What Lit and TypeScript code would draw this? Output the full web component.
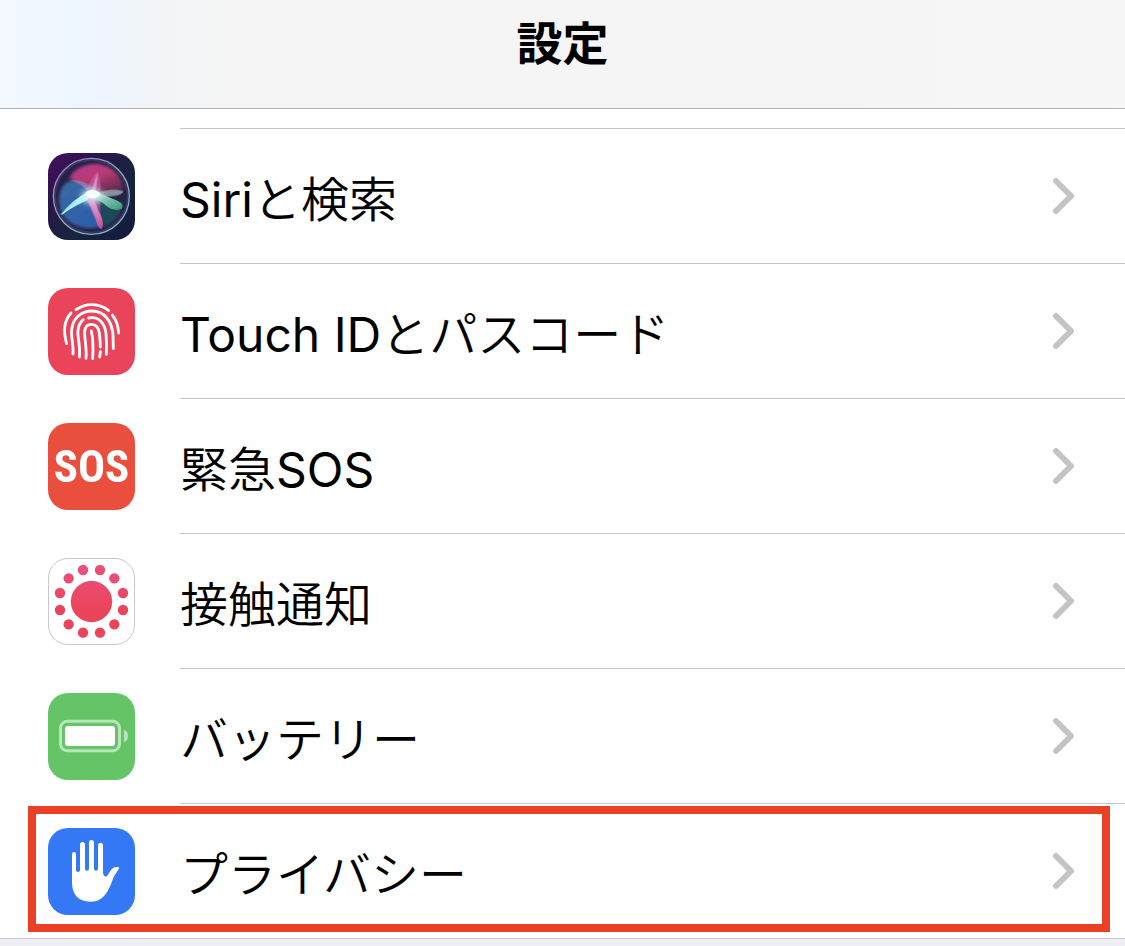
import { LitElement, html, css, svg, type TemplateResult } from "lit";
import { customElement, property } from "lit/decorators.js";

const siriIcon = html`
  <svg class="glyph" viewBox="24 24 261 261" aria-hidden="true">
    <defs>
      <linearGradient id="bg" x1="0" y1="0" x2="1" y2="1">
        <stop offset="0" stop-color="#45105f" />
        <stop offset="0.3" stop-color="#2b1548" />
        <stop offset="0.6" stop-color="#172440" />
        <stop offset="1" stop-color="#131a3a" />
      </linearGradient>
      <linearGradient id="ring" x1="0" y1="0" x2="1" y2="1">
        <stop offset="0" stop-color="#9a78c8" />
        <stop offset="0.5" stop-color="#8fa8c0" />
        <stop offset="1" stop-color="#86b8c8" />
      </linearGradient>
      <linearGradient id="pink" x1="0" y1="0" x2="0.6" y2="1">
        <stop offset="0" stop-color="#b03c90" />
        <stop offset="0.5" stop-color="#b83a72" />
        <stop offset="1" stop-color="#5a2a50" />
      </linearGradient>
      <linearGradient id="blue" x1="0" y1="0" x2="1" y2="1">
        <stop offset="0" stop-color="#3a6a9e" />
        <stop offset="1" stop-color="#2a5cae" />
      </linearGradient>
      <linearGradient id="armLeft" x1="1" y1="0" x2="0" y2="1">
        <stop offset="0" stop-color="#ffffff" />
        <stop offset="1" stop-color="#62d8e6" />
      </linearGradient>
      <linearGradient id="armRight" x1="0" y1="0" x2="1" y2="1">
        <stop offset="0" stop-color="#ffffff" />
        <stop offset="0.6" stop-color="#74c8ac" />
        <stop offset="1" stop-color="#3f9a74" />
      </linearGradient>
      <linearGradient id="armDown" x1="0" y1="0" x2="0" y2="1">
        <stop offset="0" stop-color="#f4c8f0" />
        <stop offset="1" stop-color="#d04890" />
      </linearGradient>
      <filter id="soft" x="-30%" y="-30%" width="160%" height="160%">
        <feGaussianBlur stdDeviation="1.500" />
      </filter>
      <filter id="haze" x="-30%" y="-30%" width="160%" height="160%">
        <feGaussianBlur stdDeviation="5" />
      </filter>
      <filter id="glow" x="-80%" y="-80%" width="260%" height="260%">
        <feGaussianBlur stdDeviation="9" />
      </filter>
    </defs>
    <rect x="24" y="24" width="261" height="261" fill="url(#bg)" />
    <circle cx="154" cy="154" r="113" fill="#262248" />
    <g filter="url(#haze)">
      <path d="M88 100C100 70 140 54 172 57C218 62 248 96 250 134C214 140 184 146 156 154C140 130 116 112 88 100Z" fill="url(#pink)" />
      <path d="M66 206C50 164 58 122 88 108C122 108 144 128 158 152C170 186 182 220 180 246C138 256 90 244 66 206Z" fill="url(#blue)" />
      <path d="M168 160C194 176 222 176 250 170C244 210 220 238 182 248C186 216 178 192 168 160Z" fill="#1e4858" />
    </g>
    <g filter="url(#soft)">
      <path d="M160 148C184 136 226 130 250 138C250 152 206 156 172 156Z" fill="#a8c0c0" opacity="0.7" />
      <path d="M90 107C122 102 158 118 176 148L152 156C138 128 120 112 90 107Z" fill="#9aa8dc" opacity="0.45" />
      <path d="M172 80C156 98 136 128 138 152C148 190 164 224 182 252C190 248 190 234 184 218C178 192 182 156 182 128C181 106 178 92 172 80Z" fill="#d868b8" opacity="0.5" />
      <path d="M172 84C164 108 158 130 148 150L162 158C168 134 172 108 172 84Z" fill="#f2c4ee" opacity="0.6" />
    </g>
    <ellipse cx="156" cy="154" rx="32" ry="22" fill="#c9f4f0" filter="url(#glow)" />
    <g filter="url(#soft)">
      <path d="M64 207C84 180 110 160 134 146C146 138 160 140 166 150C150 164 102 184 64 207Z" fill="url(#armLeft)" />
      <path d="M146 144C166 138 196 152 222 163C242 170 252 180 246 190C238 198 214 196 200 184C184 168 168 162 150 160Z" fill="url(#armRight)" opacity="0.9" />
      <path d="M142 152C160 156 170 178 177 202C188 218 192 240 184 252C174 250 170 236 168 222C160 196 146 180 142 152Z" fill="url(#armDown)" opacity="0.85" />
      <path d="M132 150C140 132 168 130 182 146C176 160 150 168 132 150Z" fill="#f2fffd" />
    </g>
    <path d="M66 207L138 154" stroke="#b8f4fa" stroke-width="4" stroke-linecap="round" />
    <circle cx="154" cy="154" r="109" fill="none" stroke="#4a4a78" stroke-width="6" opacity="0.5" />
    <circle cx="154" cy="154" r="114" fill="none" stroke="url(#ring)" stroke-width="4" />
  </svg>
`;

const touchIdIcon = html`
  <svg class="glyph" viewBox="24 24 261 261" aria-hidden="true">
    <g fill="none" stroke="#fff" stroke-width="8.5" stroke-linecap="round" stroke-linejoin="round">
      <path d="M108 89C138 69 177 68 206 92" />
      <path d="M93 99C74 120 69 154 80 191" />
      <path d="M217 105C229 120 235 140 236 159" />
      <path d="M99 222C101 195 93 175 95 151C97 116 123 93 156 93C194 93 216 125 219 165L220 206" />
      <path d="M118 231C122 198 112 174 114 153C115 138 121 126 130 119" />
      <path d="M146 114C177 108 194 130 198 160C200 185 200 205 199 223" />
      <path d="M138 235C141 202 133 177 134 155C135 141 143 133 154 133C168 133 176 142 178 160C180 175 181 190 181 201" />
      <path d="M181 215L179 231" />
      <path d="M154 153C159 175 160 205 158 236" />
    </g>
  </svg>
`;

const dots = [
  [129, 60], [180, 60], [223, 85], [249, 129], [249, 180], [223, 223],
  [180, 248], [129, 248], [86, 223], [60, 180], [60, 129], [86, 85],
];

const exposureIcon = html`
  <svg class="glyph" viewBox="24 24 261 261" aria-hidden="true">
    <defs>
      <linearGradient id="rose" gradientUnits="userSpaceOnUse" x1="0" y1="44" x2="0" y2="180">
        <stop offset="0" stop-color="#e9507f" />
        <stop offset="1" stop-color="#ea445a" />
      </linearGradient>
    </defs>
    <g fill="url(#rose)">
      <circle cx="154.5" cy="154.5" r="62" />
      ${dots.map(([x, y]) => svg`<circle cx=${x} cy=${y} r="15.5" />`)}
    </g>
  </svg>
`;

const batteryIcon = html`
  <svg class="glyph" viewBox="24 24 261 261" aria-hidden="true">
    <rect x="61.5" y="109" width="177" height="88" rx="20" fill="none" stroke="#b9e5bb" stroke-width="9" />
    <rect x="75" y="123" width="150" height="60" rx="9" fill="#fff" />
    <path d="M252 134C268 139 268 166 252 171Z" fill="#b9e5bb" />
  </svg>
`;

const handIcon = html`
  <svg class="glyph" viewBox="84 99 261 261" aria-hidden="true">
    <path
      fill="#fff"
      d="M156 177Q156 171 162 171Q168 171 168 177V226Q168 231 174 231Q180 231 180 225V149Q180 141 187.500 141Q195 141 195 149V222Q195 227 201 227Q207 227 207 221V143Q207 135 214.500 135Q222 135 222 143V221Q222 227 228 227Q234 227 234 221V151Q234 143 241.500 143Q249 143 249 151V232Q250 245 258 245C266 240 270 226 279 219C286 215 295 216 298 219C294 228 285 236 280 248C269 278 256 320 212 320C172 320 156 296 156 262Z"
    />
  </svg>
`;

interface Item {
  kind: string;
  label: TemplateResult;
  icon: TemplateResult;
  highlighted?: boolean;
}

const items: Item[] = [
  { kind: "siri", label: html`<span class="latin">Siri</span>と検索`, icon: siriIcon },
  { kind: "touch", label: html`<span class="latin">Touch ID</span>とパスコード`, icon: touchIdIcon },
  { kind: "sos", label: html`緊急<span class="latin">SOS</span>`, icon: html`SOS` },
  { kind: "exposure", label: html`接触通知`, icon: exposureIcon },
  { kind: "battery", label: html`バッテリー`, icon: batteryIcon },
  { kind: "privacy", label: html`プライバシー`, icon: handIcon, highlighted: true },
];

@customElement("settings-row")
class SettingsRow extends LitElement {
  @property({ attribute: false }) item!: Item;

  static styles = css`
    :host {
      display: block;
      position: relative;
    }
    .row {
      display: flex;
      align-items: center;
      gap: 45px;
      padding-left: 48px;
      color: #000;
      text-decoration: none;
    }
    .icon {
      display: flex;
      flex: none;
      align-items: center;
      justify-content: center;
      box-sizing: border-box;
      width: 87px;
      height: 87px;
      margin-top: 2px;
      border-radius: 20px;
      overflow: hidden;
    }
    .glyph {
      flex: none;
      width: 87px;
      height: 87px;
    }
    .touch { background: #ea445a; }
    .sos {
      background: #ea4e3d;
      color: #fff;
      font: 700 45px/48px "Roboto Condensed", "Liberation Sans Narrow", "Liberation Sans", sans-serif;
    }
    .exposure {
      background: #fff;
      border: 1px solid #c8c8ca;
    }
    .battery { background: #65c466; }
    .privacy { background: #3478f6; }
    .body {
      display: flex;
      flex: 1;
      align-items: center;
      justify-content: space-between;
      box-sizing: border-box;
      min-height: 135px;
      padding-right: 49px;
      border-top: 1px solid #c6c6c8;
    }
    .label {
      font: 350 48px/72px "Noto Sans CJK JP DemiLight", "Noto Sans CJK JP", sans-serif;
    }
    .latin {
      font-family: Inter, sans-serif;
      font-weight: 400;
      line-height: 0;
    }
    .chevron {
      flex: none;
      width: 24px;
      height: 38px;
    }
    .marker {
      position: absolute;
      inset: 3px 15px 6px 28px;
      border: 8px solid #ea4025;
      pointer-events: none;
    }
  `;

  render() {
    const { kind, label, icon, highlighted } = this.item;
    return html`
      <a class="row" href="#${kind}">
        <span class="icon ${kind}" aria-hidden="true">${icon}</span>
        <span class="body">
          <span class="label">${label}</span>
          <svg class="chevron" viewBox="0 0 24 38" aria-hidden="true">
            <path d="M4 4L19 19L4 34" fill="none" stroke="#c4c4c7" stroke-width="6" stroke-linecap="round" stroke-linejoin="round" />
          </svg>
        </span>
      </a>
      ${highlighted ? html`<div class="marker"></div>` : null}
    `;
  }
}

@customElement("app-root")
class AppRoot extends LitElement {
  static styles = css`
    :host {
      display: block;
      min-height: 100vh;
      background: #f0eff5;
    }
    .bar {
      box-sizing: border-box;
      height: 109px;
      padding-top: 5px;
      border-bottom: 1px solid #b2b2b2;
      background: linear-gradient(90deg, #f3f9ff 0%, #eef6ff 7%, #f2f5f8 14%, #f5f5f5 20%, #f5f5f5 75%, #f7f7f7 100%);
    }
    .title {
      margin: 0;
      text-align: center;
      font: 700 46px/70px "Noto Sans CJK JP", sans-serif;
      color: #000;
    }
    .list {
      margin: 0;
      padding: 19px 0 0;
      list-style: none;
      background: #fff;
      border-bottom: 1px solid #c6c6c8;
    }
  `;

  render() {
    return html`
      <header class="bar"><h1 class="title">設定</h1></header>
      <main>
        <ul class="list">
          ${items.map((item) => html`<li><settings-row .item=${item}></settings-row></li>`)}
        </ul>
      </main>
    `;
  }
}
